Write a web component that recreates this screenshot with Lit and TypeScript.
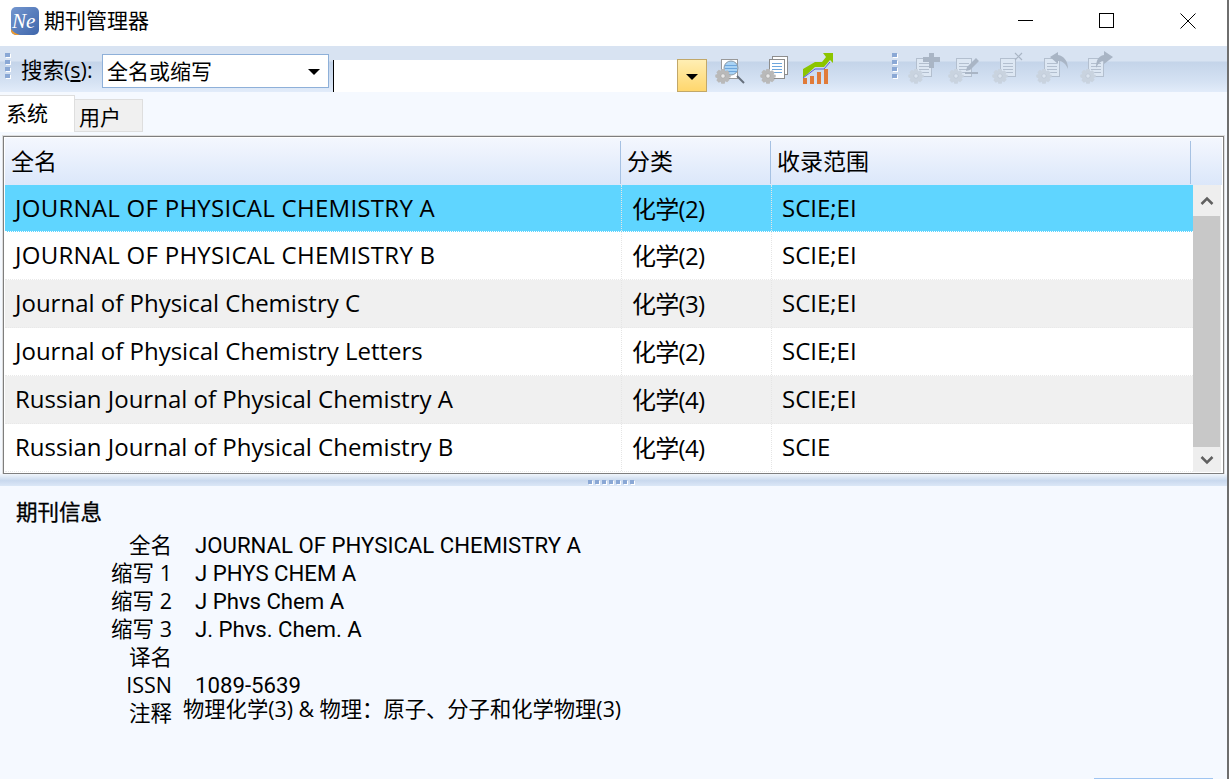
import { LitElement, html, css, svg } from "lit";
import { customElement } from "lit/decorators.js";

const rows = [
  ["JOURNAL OF PHYSICAL CHEMISTRY A", "化学(2)", "SCIE;EI", true],
  ["JOURNAL OF PHYSICAL CHEMISTRY B", "化学(2)", "SCIE;EI", true],
  ["Journal of Physical Chemistry C", "化学(3)", "SCIE;EI", false],
  ["Journal of Physical Chemistry Letters", "化学(2)", "SCIE;EI", false],
  ["Russian Journal of Physical Chemistry A", "化学(4)", "SCIE;EI", false],
  ["Russian Journal of Physical Chemistry B", "化学(4)", "SCIE", false],
];
const info = [
  ["全名", "JOURNAL OF PHYSICAL CHEMISTRY A", false],
  ["缩写 1", "J PHYS CHEM A", false],
  ["缩写 2", "J Phys Chem A", true],
  ["缩写 3", "J. Phys. Chem. A", true],
  ["译名", "", false],
  ["ISSN", "1089-5639", false],
];

const gear = (x: number, y: number, c = "#b9b9b9", hub = "#e8e8e8", ring = "#999") => svg`
  <g transform="translate(${x} ${y}) scale(.86)">
    <path d="M-2-8h4l.6 2.400 2.300-1.200 2.800 2.800-1.200 2.300L9-1.500v3l-2.500.7 1.200 2.300-2.800 2.800-2.300-1.200L2 9h-4l-.6-2.400-2.300 1.200-2.800-2.800 1.200-2.300L-9 1.500v-3l2.500-.7-1.200-2.300 2.800-2.800 2.300 1.200z" fill=${c}/>
    <circle r="2.500" fill=${hub} stroke=${ring} stroke-width=".6"/>
  </g>`;

const page = (x: number, y: number) => {
  const stroke = "#b3bfcf";
  return svg`
  <rect x=${x + 0.5} y=${y + 0.5} width="15" height="18" fill="#dde7f3" stroke=${stroke}/>
  <path d="M${x + 3} ${y + 5.500}h10M${x + 3} ${y + 8.500}h10M${x + 3} ${y + 11.500}h10M${x + 3} ${y + 14.500}h10" stroke=${stroke}/>`;
};

const disabledIcons = [
  svg`<path d="M21 2h5v4h6v5h-6v6h-5v-6h-6V6h6z" fill="#a9b5c5"/>`,
  svg`<path d="M19 16L28 7l3 3-9 9-4 1zM17 21h13v2H17z" fill="#a9b5c5"/>`,
  svg`<path d="M23 2l7 7M30 2l-7 7" stroke="#a9b5c5" stroke-width="1.200" fill="none"/>`,
  svg`<path d="M14 6l8-5v3c6 1 10 6 10 14-2-5-5-8-10-8v3z" fill="#a9b5c5"/>`,
  svg`<path d="M33 6L24 0v4c-6 1-8 6-8 13 2-4 4-7 8-7v3z" fill="#a9b5c5"/>`,
];

@customElement("app-root")
export class AppRoot extends LitElement {
  static styles = css`
    :host {
      display: block;
      width: 1229px;
      height: 779px;
      overflow: hidden;
      background: #f5f9ff;
      font-family: "Open Sans", "Noto Sans CJK SC", sans-serif;
      color: #000;
    }
    .win { display: flex; flex-direction: column; height: 779px; border-right: 2px solid #6e6e6e; box-sizing: border-box; position: relative; }
    .title { height: 46px; flex: none; background: #fff; display: flex; align-items: flex-start; padding-left: 11px; font-size: 21px; }
    .logo { width: 28px; height: 28px; margin: 7px 5px 0 0; display: block; flex: none; }
    .title-text { flex: 1; line-height: 30px; margin-top: 5px; }
    .winbtn { display: block; flex: none; margin-top: 13px; }
    .w-min { margin-top: 20px; margin-right: 65px; }
    .w-max { margin-right: 65px; }
    .w-close { margin-right: 31px; }
    .toolbar {
      height: 46px; flex: none; display: flex; align-items: flex-start;
      background: linear-gradient(#d8e3f2 0, #d8e3f2 15px, #c4d4e9 16px, #d5e2f3 36px, #e2ecfa 46px);
    }
    .grip { width: 5px; margin: 7px 0 0 5px; display: flex; flex-direction: column; gap: 3px; flex: none; }
    .grip.second { margin-left: 52px; }
    .grip i { display: block; width: 5px; height: 4px; background: #8aa8d5; box-shadow: 1px 1px 0 #fff; }
    .search-label { font-size: 21.500px; margin: 9px 0 0 11px; width: 81px; flex: none; white-space: nowrap; line-height: 30px; }
    .search-label u { text-underline-offset: 2px; }
    .combo { width: 221px; height: 30px; margin-top: 8px; box-sizing: content-box; flex: none; background: #fff; border: 1px solid #8eb0d9; display: flex; align-items: center; justify-content: space-between; padding: 0 0 2px 4px; font-size: 21px; }
    .arrow { width: 0; height: 0; border: 6.500px solid transparent; border-top: 6px solid #000; border-bottom: 0; margin: 4px 8px 0 0; }
    .input { margin: 14px 0 0 4px; width: 344px; height: 32px; background: #fff; box-sizing: border-box; border-left: 1px solid #000; flex: none; }
    .dd { width: 30px; height: 33px; margin-top: 13px; flex: none; box-sizing: border-box; border: 1px solid #c2a869; background: linear-gradient(#ffeeb3 0, #ffe79e 9px, #ffd66b 32px); display: flex; align-items: center; justify-content: center; padding-top: 3px; }
    .dd .arrow { margin: 0; }
    .tool { display: block; flex: none; margin-top: 5px; }
    .t1 { margin-left: 8px; }
    .t2 { margin-left: 11px; }
    .t3 { margin-left: 8px; }
    .d0 { margin-left: 11px; }
    .d1 { margin-left: 4px; }
    .dn { margin-left: 8px; }
    .tabs { height: 40px; flex: none; display: flex; align-items: flex-end; font-size: 21px; }
    .tab { box-sizing: border-box; display: flex; align-items: center; }
    .tab.on { width: 75px; height: 37px; background: #fff; border: 1px solid #dedede; border-left: 0; border-bottom: 0; padding: 0 0 4px 6px; }
    .tab.off { width: 68px; height: 33px; background: #f0f0f0; border: 1px solid #dedede; border-left: 0; padding: 0 0 0 4px; }
    .table { margin: 4px 3px 0 3px; height: 338px; box-sizing: border-box; flex: none; border: 1px solid #7e7e7e; outline: 1px solid #dedede; background: #fff; display: grid; grid-template-rows: 48px 1fr; }
    .thead { display: grid; grid-template-columns: 616px 150px 420px 1fr; background: linear-gradient(#f4f7fe, #dbe7fa); font-size: 23px; border-top: 1px solid #fff; margin: 0 1px; box-sizing: border-box; }
    .thead div { padding-left: 6px; border-right: 1px solid #a6c1e2; margin: 3px 0 1px; line-height: 41px; }
    .thead div:last-child { border: 0; }
    .tbody { display: grid; grid-template-columns: 1fr 28px; min-height: 0; margin: 0 2px 1px 1px; }
    .row { display: grid; grid-template-columns: 617px 150px 1fr; height: 48px; box-sizing: border-box; font-size: 24px; align-items: center; border-bottom: 1px dotted #e9e9e9; }
    .row:first-child { height: 47px; background: #5fd5ff; border-bottom: 1px dotted #fff; }
    .row:nth-child(3), .row:nth-child(5) { background: #f0f0f0; }
    .row span { padding: 0 0 2px 10px; white-space: nowrap; border-right: 1px dotted #e5e5e5; height: 100%; display: flex; align-items: center; box-sizing: border-box; }
    .row.upper span:first-child { letter-spacing: .27px; }
    .row span:nth-child(2) { letter-spacing: -.7px; }
    .row span:last-child { border: 0; }
    .sb { background: #eeeeee; display: flex; flex-direction: column; align-items: stretch; }
    .sb .cap { height: 31px; display: flex; align-items: center; justify-content: center; flex: none; }
    .sb .cap.down { height: 25px; }
    .sb .thumb { flex: 1; background: #c8c8c8; margin-right: 1px; }
    .split { height: 12px; flex: none; background: linear-gradient(#f0f5fb, #c9d9ee 55%, #dbe7f7); display: flex; justify-content: center; align-items: flex-end; gap: 3px; padding: 0 6px 2px 0; box-sizing: border-box; }
    .split i { width: 4px; height: 4px; background: #8aa8d5; box-shadow: 1px 1px 0 #fff; }
    .panel { flex: 1; padding: 13px 0 0 16px; }
    .panel h3 { margin: 0 0 6px; font-size: 21.500px; line-height: 26px; font-weight: 400; -webkit-text-stroke: .3px #000; }
    .kv { display: grid; grid-template-columns: 156px 1fr; grid-auto-rows: 28px; column-gap: 23px; line-height: 28px; }
    .kv .k { text-align: right; white-space: nowrap; font-size: 21.500px; }
    .kv .v { white-space: nowrap; font-family: Roboto, "Noto Sans CJK SC", sans-serif; font-size: 22.200px; }
    .kv .v.clip { height: 22px; overflow: hidden; }
    .note { display: flex; align-items: flex-start; line-height: 28px; }
    .note .k { width: 156px; text-align: right; flex: none; font-size: 21.500px; }
    .note .v { margin: -1px 0 0 11px; line-height: 22px; font-size: 21.300px; white-space: nowrap; }
    .corner { position: absolute; right: 14px; bottom: 0; width: 119px; height: 1px; background: #9fc5f2; }
  `;

  render() {
    return html`<div class="win">
      <div class="title">
        <svg class="logo" viewBox="0 0 28 28">
          <defs>
            <linearGradient id="lg" x1="0" y1="0" x2="1" y2="1"><stop offset="0" stop-color="#7396cf"/><stop offset="1" stop-color="#3f66ab"/></linearGradient>
          </defs>
          <rect width="28" height="28" rx="5" fill="url(#lg)"/>
          <path d="M0 22c2 3 5 5 9 6H5a5 5 0 0 1-5-5z" fill="#f09a2b"/>
          <text x="1" y="21" font-family="Liberation Serif" font-style="italic" font-size="21" fill="#fff">Ne</text>
        </svg>
        <span class="title-text">期刊管理器</span>
        <svg class="winbtn w-min" width="16" height="2"><path d="M0 .5h15" stroke="#000"/></svg>
        <svg class="winbtn w-max" width="16" height="16"><rect x=".5" y=".5" width="14" height="14" fill="none" stroke="#000"/></svg>
        <svg class="winbtn w-close" width="16" height="16"><path d="M.5.5l15 15M15.500.5l-15 15" stroke="#000" fill="none"/></svg>
      </div>
      <div class="toolbar">
        <div class="grip"><i></i><i></i><i></i><i></i></div>
        <div class="search-label">搜索(<u>s</u>):</div>
        <div class="combo"><span>全名或缩写</span><span class="arrow"></span></div>
        <div class="input"></div>
        <div class="dd"><span class="arrow"></span></div>
        <svg class="tool t1" width="34" height="34" viewBox="0 0 34 34">
          <rect x="6.500" y="8.500" width="16" height="19" fill="#fff" stroke="#999"/>
          <path d="M22 25l7 7" stroke="#66707c" stroke-width="2"/>
          <circle cx="16" cy="17" r="7" fill="#a9d3f5" stroke="#8a9aa8"/>
          <path d="M10 14.500h12M10 17.500h12M10 20.500h12" stroke="#6ea6dc"/>
          ${gear(8, 25)}
        </svg>
        <svg class="tool t2" width="34" height="34" viewBox="0 0 34 34">
          <rect x="12.500" y="5.500" width="15" height="18" fill="#fff" stroke="#8d8d8d"/>
          <rect x="9.500" y="8.500" width="15" height="19" fill="#fff" stroke="#8d8d8d"/>
          <path d="M12 12.500h10M12 15.500h10M12 18.500h10M12 21.500h10" stroke="#6ea6dc"/>
          ${gear(8, 25)}
        </svg>
        <svg class="tool t3" width="38" height="36" viewBox="0 0 38 36">
          <rect x="1" y="27" width="4" height="6" fill="#e07b39"/><rect x="8" y="25" width="4" height="8" fill="#e07b39"/>
          <rect x="15" y="21" width="4" height="12" fill="#e07b39"/><rect x="22" y="18" width="4" height="15" fill="#e07b39"/>
          <path d="M1 27v-9l12-7h7l4-5-3-4h10v10l-3-3-6 7h-9z" fill="#8cc500"/>
          <path d="M1 27l12-9h9l6-7" stroke="#5a5adf" fill="none"/>
        </svg>
        <div class="grip second"><i></i><i></i><i></i><i></i></div>
        ${disabledIcons.map((ic, i) => html`<svg class="tool ${i === 0 ? "d0" : i === 1 ? "d1" : "dn"}" width="36" height="34" viewBox="0 0 36 34">
          ${page(8, 7)}
          ${ic}
          ${gear(8, 25, "#c9d3df", "#dbe4ef", "#b3bfcf")}
        </svg>`)}
      </div>
      <div class="tabs">
        <div class="tab on">系统</div>
        <div class="tab off">用户</div>
      </div>
      <div class="table">
        <div class="thead"><div>全名</div><div>分类</div><div>收录范围</div><div></div></div>
        <div class="tbody">
          <div>
            ${rows.map((r) => html`<div class="row ${r[3] ? "upper" : ""}"><span>${r[0]}</span><span>${r[1]}</span><span>${r[2]}</span></div>`)}
          </div>
          <div class="sb">
            <div class="cap"><svg width="14" height="10"><path d="M1.500 8l5.500-5.500L12.500 8" fill="none" stroke="#606060" stroke-width="2.500"/></svg></div>
            <div class="thumb"></div>
            <div class="cap down"><svg width="14" height="10"><path d="M1.500 2l5.500 5.500L12.500 2" fill="none" stroke="#606060" stroke-width="2.500"/></svg></div>
          </div>
        </div>
      </div>
      <div class="split"><i></i><i></i><i></i><i></i><i></i><i></i><i></i></div>
      <div class="panel">
        <h3>期刊信息</h3>
        <div class="kv">
          ${info.map((p) => html`<div class="k">${p[0]}</div><div class="v ${p[2] ? "clip" : ""}">${p[1]}</div>`)}
        </div>
        <div class="note"><div class="k">注释</div><div class="v">物理化学(3) &amp; 物理：原子、分子和化学物理(3)</div></div>
      </div>
      <div class="corner"></div>
    </div>`;
  }
}
